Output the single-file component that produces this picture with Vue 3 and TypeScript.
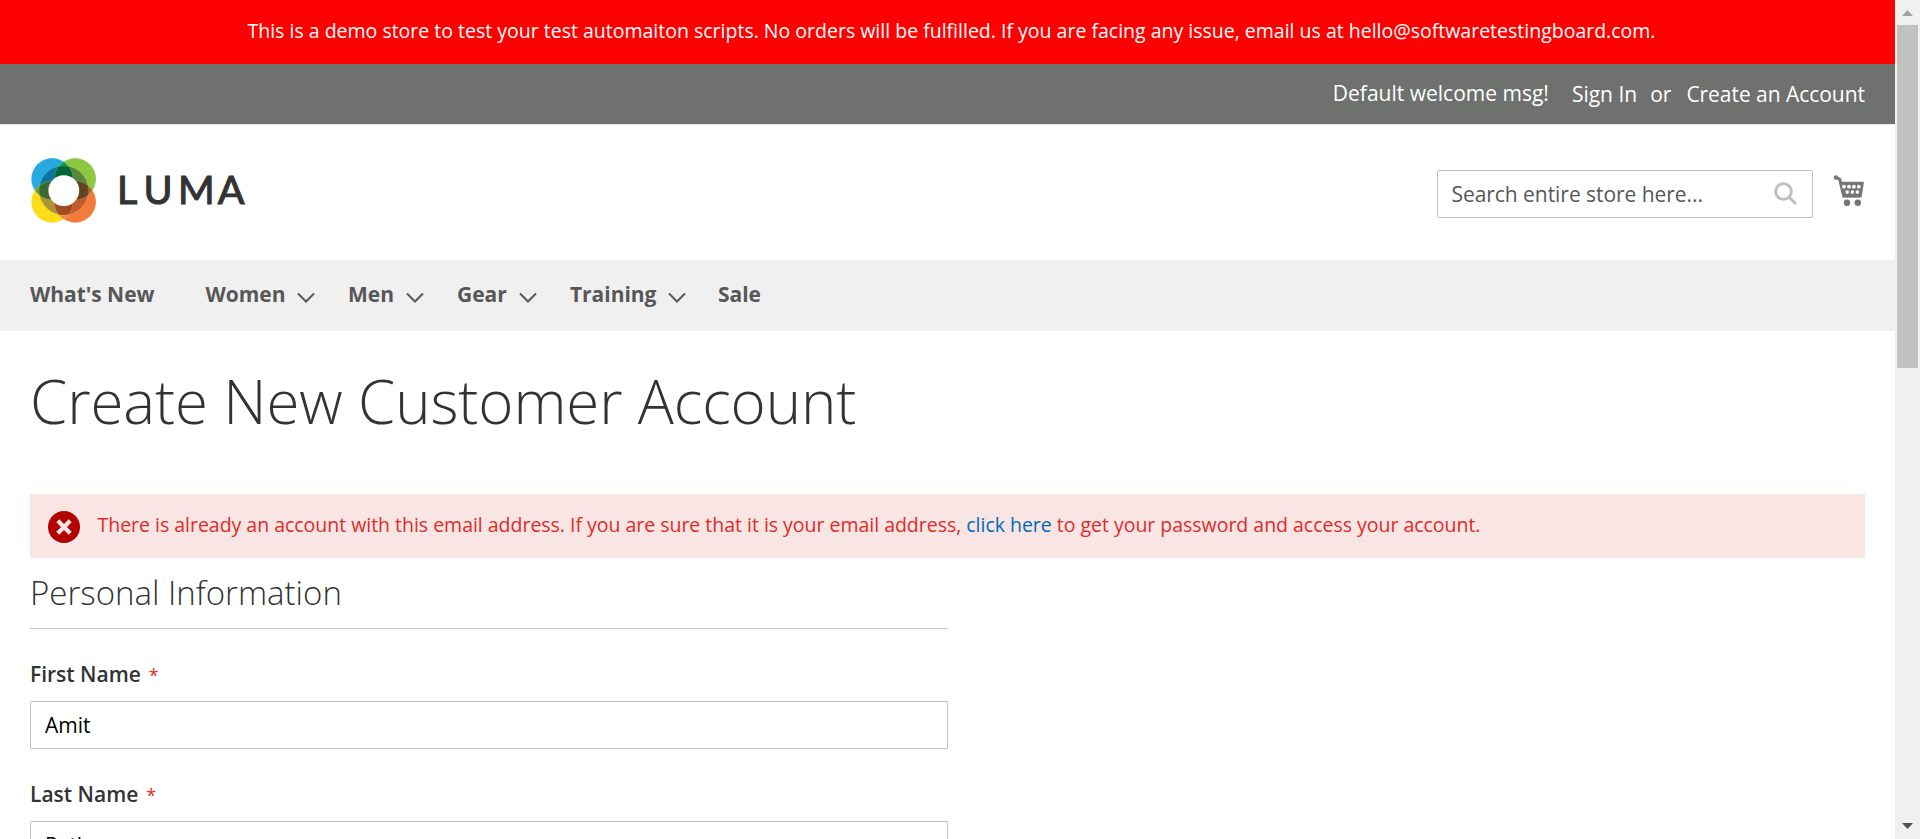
<script setup lang="ts">
import { ref } from 'vue'

interface NavItem { label: string; slot: number; children: boolean }
interface Field { id: string; label: string; value: string }

const nav: NavItem[] = [
  { label: "What's New", slot: 175.5, children: false },
  { label: 'Women', slot: 142.5, children: true },
  { label: 'Men', slot: 109, children: true },
  { label: 'Gear', slot: 113, children: true },
  { label: 'Training', slot: 148, children: true },
  { label: 'Sale', slot: 60, children: false },
]
const fields = ref<Field[]>([
  { id: 'firstname', label: 'First Name', value: 'Amit' },
  { id: 'lastname', label: 'Last Name', value: 'Path' },
])
const search = ref('')
</script>

<template>
  <div class="viewport">
    <div class="page">
      <div class="notice"><span>This is a demo store to test your test automaiton scripts. No orders will be fulfilled. If you are facing any issue, email us at hello@softwaretestingboard.com.</span></div>
      <div class="panel">
        <span class="welcome">Default welcome msg!</span>
        <a class="signin">Sign In</a>
        <span class="or">or</span>
        <a class="create">Create an Account</a>
      </div>
      <header class="header">
        <svg class="logo" width="222" height="68" viewBox="30 156 222 68">
          <defs>
            <clipPath id="tl"><circle cx="52.1" cy="178.9" r="20.8" /></clipPath>
            <clipPath id="tr"><circle cx="75.2" cy="178.9" r="20.8" /></clipPath>
            <clipPath id="bl"><circle cx="52.1" cy="201.9" r="20.8" /></clipPath>
            <clipPath id="br"><circle cx="75.2" cy="201.9" r="20.8" /></clipPath>
          </defs>
          <circle cx="52.1" cy="178.9" r="20.8" fill="#27a9e1" />
          <circle cx="75.2" cy="178.9" r="20.8" fill="#8dc63f" />
          <circle cx="52.1" cy="201.9" r="20.8" fill="#fedd16" />
          <circle cx="75.2" cy="201.9" r="20.8" fill="#f47b3c" />
          <g clip-path="url(#tl)"><circle cx="75.2" cy="178.9" r="20.8" fill="#00a150" /><circle cx="52.1" cy="201.9" r="20.8" fill="#6a9a35" /></g>
          <g clip-path="url(#br)"><circle cx="75.2" cy="178.9" r="20.8" fill="#a5692d" /><circle cx="52.1" cy="201.9" r="20.8" fill="#f58a36" /></g>
          <circle cx="63.7" cy="190.4" r="24.7" fill="#0a759d" clip-path="url(#tl)" />
          <circle cx="63.7" cy="190.4" r="24.7" fill="#57863c" clip-path="url(#tr)" />
          <circle cx="63.7" cy="190.4" r="24.7" fill="#a99634" clip-path="url(#bl)" />
          <circle cx="63.7" cy="190.4" r="24.7" fill="#c05c2e" clip-path="url(#br)" />
          <g clip-path="url(#tl)"><g clip-path="url(#tr)"><circle cx="63.7" cy="190.4" r="24.7" fill="#006837" /></g></g>
          <g clip-path="url(#tl)"><g clip-path="url(#bl)"><circle cx="63.7" cy="190.4" r="24.7" fill="#3b6a32" /></g></g>
          <g clip-path="url(#tr)"><g clip-path="url(#br)"><circle cx="63.7" cy="190.4" r="24.7" fill="#61441d" /></g></g>
          <g clip-path="url(#bl)"><g clip-path="url(#br)"><circle cx="63.7" cy="190.4" r="24.7" fill="#a24a22" /></g></g>
          <g class="rims">
            <circle cx="52.1" cy="178.9" r="20.8" /><circle cx="75.2" cy="178.9" r="20.8" />
            <circle cx="52.1" cy="201.9" r="20.8" /><circle cx="75.2" cy="201.9" r="20.8" />
            <circle cx="63.7" cy="190.4" r="24.7" />
          </g>
          <circle cx="63.8" cy="190.6" r="15.4" fill="#fff" />
          <text class="wordmark" x="117 143.4 177.9 217.8" y="203.7">LUMA</text>
        </svg>
        <div class="tools">
          <label class="search">
            <input v-model="search" placeholder="Search entire store here..." />
            <svg width="24" height="24" viewBox="0 0 24 24"><circle cx="9.5" cy="9.5" r="7.9" /><path d="M15.2 15.2 22 22" /></svg>
          </label>
          <svg class="cart" width="31" height="32" viewBox="0 0 31 32">
            <path class="frame" d="M3 2.5 6.7 4.3 10.7 21H27" />
            <circle cx="3" cy="2.5" r="2.2" />
            <path d="M6.5 6.8H31L28.6 22.3H10.2Z" />
            <g class="holes">
              <circle v-for="x in [11, 16, 20.9, 25.8]" :key="x" :cx="x" cy="11.7" r="1.9" />
              <circle v-for="x in [14.2, 19.3, 24.4]" :key="x" :cx="x" cy="17.1" r="1.8" />
            </g>
            <circle cx="14" cy="27.8" r="3.2" /><circle cx="24.8" cy="27.8" r="3.2" />
          </svg>
        </div>
      </header>
      <nav class="nav">
        <a v-for="item in nav" :key="item.label" class="nav-item" :style="{ width: item.slot + 'px' }">
          <span>{{ item.label }}</span>
          <svg v-if="item.children" width="18" height="11" viewBox="0 0 18 11"><path d="M1 1.5 9 9.5 17 1.5" /></svg>
        </a>
      </nav>
      <main class="main">
        <h1>Create New Customer Account</h1>
        <div class="alert">
          <svg width="32" height="32" viewBox="0 0 32 32"><circle cx="16" cy="16" r="16" fill="#b30000" /><path d="M9.8 9.8 22.2 22.2M22.2 9.8 9.8 22.2" stroke="#f9e5e4" stroke-width="4.2" /></svg>
          <p>There is already an account with this email address. If you are sure that it is your email address, <a>click here</a> to get your password and access your account.</p>
        </div>
        <form class="form">
          <h2>Personal Information</h2>
          <div v-for="f in fields" :key="f.id" class="field">
            <label :for="f.id">{{ f.label }}<span class="star">*</span></label>
            <input :id="f.id" v-model="f.value" />
          </div>
        </form>
      </main>
    </div>
    <div class="scrollbar">
      <svg width="11" height="6" viewBox="0 0 11 6"><path d="M0 6 5.5 0 11 6Z" fill="#a3a3a3" /></svg>
      <div class="thumb"></div>
      <svg class="down" width="11" height="6" viewBox="0 0 11 6"><path d="M0 0 5.5 6 11 0Z" fill="#505050" /></svg>
    </div>
  </div>
</template>

<style>
body { margin: 0; overflow: hidden; }
</style>

<style scoped>
.viewport { display: flex; width: 1920px; height: 839px; overflow: hidden; background: #fff; color: #333; font-family: "Open Sans", "Noto Sans", sans-serif; font-size: 21px; }
.viewport * { box-sizing: border-box; }
.page { width: 1895px; height: 839px; overflow: hidden; }
.notice { height: 64px; background: #f00; color: #fff; font-size: 19.5px; line-height: 27px; padding: 17px 0 0 8px; text-align: center; white-space: nowrap; }
.panel { height: 61px; background: #6e716e; border-bottom: 1px solid #e8e8e8; color: #fff; display: flex; justify-content: flex-end; padding: 14px 30px 0 0; line-height: 30px; white-space: nowrap; }
.signin, .or, .create { padding-top: 1px; }
.signin { margin-left: 23px; }
.or { margin-left: 13px; }
.create { margin-left: 15px; letter-spacing: -.04px; }
.header { height: 135px; display: flex; justify-content: space-between; padding: 31px 30px 0; }
.logo { display: block; }
.rims { fill: none; stroke: #fff; stroke-opacity: .25; stroke-width: .5; }
.wordmark { font-family: Lato, sans-serif; font-weight: 400; font-size: 39.5px; fill: #333; stroke: #333; stroke-width: 1.1; }
.tools { display: flex; padding-top: 14px; }
.search { width: 376px; height: 48px; border: 1px solid #c2c2c2; border-radius: 2px; display: flex; padding: 0 14px 0 13.5px; }
.search input { border: 0; outline: 0; padding: 0; flex: 1; min-width: 0; font: inherit; letter-spacing: -.05px; color: #575757; background: none; }
.search input::placeholder { color: #575757; opacity: 1; }
.search svg { margin-top: 11px; fill: none; stroke: #bdbdbd; stroke-width: 2.8; }
.cart { margin: 5px 1px 0 20px; fill: #757575; }
.cart .frame { fill: none; stroke: #757575; stroke-width: 3; }
.cart .holes { fill: #fff; }
.nav { height: 71px; background: #f0f0f0; display: flex; padding-left: 30px; font-weight: 700; letter-spacing: -.04px; color: #575757; line-height: 30px; }
.nav-item { display: flex; padding-top: 19px; white-space: nowrap; }
.nav-item svg { margin: 13px 0 0 12px; fill: none; stroke: #575757; stroke-width: 2; }
.main { padding: 0 30px; }
h1 { margin: 0; height: 163px; padding-top: 37px; font-size: 60px; line-height: 66px; font-weight: 300; letter-spacing: -.1px; }
.alert { height: 64px; background: #fae5e5; color: #e02b27; display: flex; padding-left: 18px; font-size: 19.5px; letter-spacing: -.02px; }
.alert svg { margin-top: 17px; }
.alert p { margin: 17px 0 0 17.5px; line-height: 27px; white-space: nowrap; }
.alert a { color: #006bb4; }
.form { width: 918px; }
h2 { margin: 0 0 29px; height: 71px; padding-top: 15px; border-bottom: 1px solid #c5c5c5; font-size: 33px; line-height: 40px; font-weight: 300; }
.field { height: 120px; }
.field label { display: block; height: 43px; line-height: 30px; padding-top: 1px; font-weight: 600; }
.star { color: #e02b27; font-size: 18px; font-weight: 400; margin-left: 8px; }
.field input { width: 100%; height: 48px; border: 1px solid #c2c2c2; border-radius: 1px; padding: 0 14px; font: inherit; color: #000; outline: 0; }
.scrollbar { width: 25px; background: #f0f0f0; display: flex; flex-direction: column; align-items: center; padding-top: 10px; }
.scrollbar svg { display: block; flex: none; }
.thumb { width: 21px; height: 343px; margin-top: 9px; background: #c1c1c1; flex: none; }
.down { margin-top: 455px; }
</style>
